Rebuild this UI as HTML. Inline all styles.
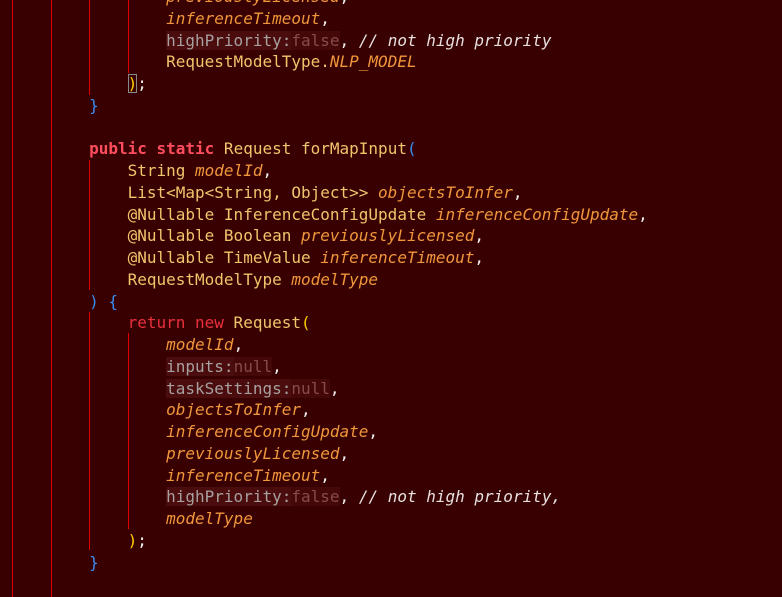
<!DOCTYPE html>
<html><head><style>
body{margin:0;width:782px;height:597px;background:#380000;overflow:hidden;position:relative}
pre{position:absolute;left:12px;top:-14px;margin:0;font-family:"DejaVu Sans Mono","Liberation Mono",monospace;font-size:16px;line-height:21.75px;color:#f2c46c}
.i{font-style:italic;color:#f0963c}
.k{color:#ff4d5e;font-weight:bold}
.r{color:#e8303c}
.w{color:#f0f0f0}
.c{color:#e8e0e0;font-style:italic}
.h{background:#4a0c0c;color:#a8a0a0}
.n{color:#8a4a4a;background:#440808}
.b{color:#3a8cf0}
.y{color:#ffd000}
.g{position:absolute;width:1px;background:#e00000}
</style></head><body>
<div class="g" style="left:12px;top:0;height:597px"></div>
<div class="g" style="left:51px;top:0;height:597px"></div>
<div class="g" style="left:89px;top:0;height:95px"></div>
<div class="g" style="left:128px;top:0;height:73px"></div>
<div class="g" style="left:89px;top:160px;height:130px"></div>
<div class="g" style="left:89px;top:312px;height:238px"></div>
<div class="g" style="left:128px;top:333px;height:196px"></div>
<pre>                <span class="i">previouslyLicensed</span><span class="w">,</span>
                <span class="i">inferenceTimeout</span><span class="w">,</span>
                <span class="h">highPriority:</span><span class="n">false</span><span class="w">,</span> <span class="c">// not high priority</span>
                RequestModelType.<span class="i">NLP_MODEL</span>
            <span class="y" style="outline:1px solid #888;outline-offset:-1px">)</span><span class="w">;</span>
        <span class="b">}</span>

        <span class="k">public static</span> Request forMapInput<span class="b">(</span>
            String <span class="i">modelId</span><span class="w">,</span>
            List&lt;Map&lt;String, Object&gt;&gt; <span class="i">objectsToInfer</span><span class="w">,</span>
            @Nullable InferenceConfigUpdate <span class="i">inferenceConfigUpdate</span><span class="w">,</span>
            @Nullable Boolean <span class="i">previouslyLicensed</span><span class="w">,</span>
            @Nullable TimeValue <span class="i">inferenceTimeout</span><span class="w">,</span>
            RequestModelType <span class="i">modelType</span>
        <span class="b">) {</span>
            <span class="r">return new</span> Request<span class="y">(</span>
                <span class="i">modelId</span><span class="w">,</span>
                <span class="h">inputs:</span><span class="n">null</span><span class="w">,</span>
                <span class="h">taskSettings:</span><span class="n">null</span><span class="w">,</span>
                <span class="i">objectsToInfer</span><span class="w">,</span>
                <span class="i">inferenceConfigUpdate</span><span class="w">,</span>
                <span class="i">previouslyLicensed</span><span class="w">,</span>
                <span class="i">inferenceTimeout</span><span class="w">,</span>
                <span class="h">highPriority:</span><span class="n">false</span><span class="w">,</span> <span class="c">// not high priority,</span>
                <span class="i">modelType</span>
            <span class="y">)</span><span class="w">;</span>
        <span class="b">}</span>
</pre>
</body></html>
